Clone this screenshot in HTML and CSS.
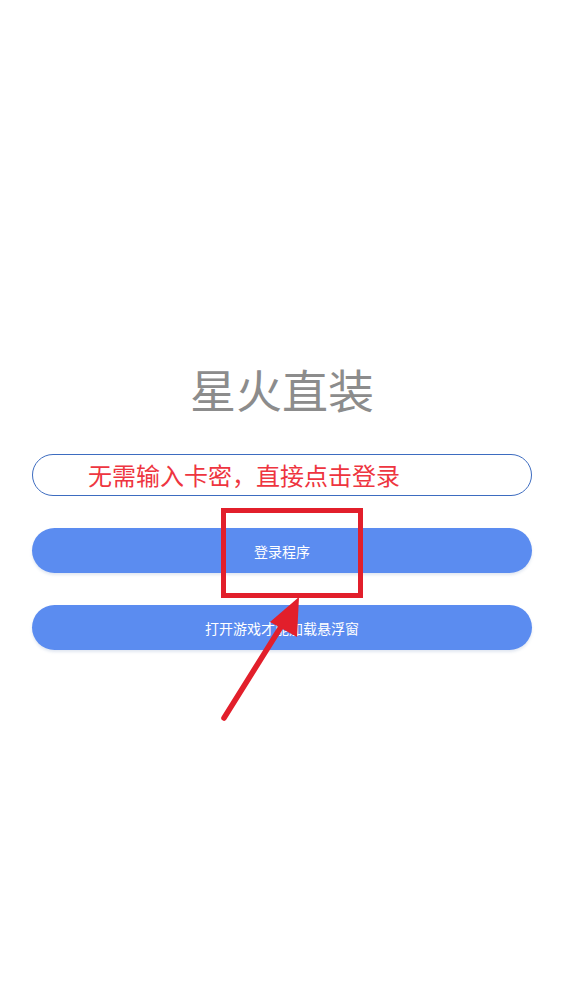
FILE: index.html
```html
<!DOCTYPE html>
<html lang="zh-CN">
<head>
<meta charset="utf-8">
<link rel="stylesheet" href="styles.css">
</head>
<body>
<main class="page">
  <h1 class="title">星火直装</h1>
  <div class="input">无需输入卡密，直接点击登录</div>
  <button class="btn btn-login">登录程序</button>
  <button class="btn btn-game">打开游戏才能加载悬浮窗</button>
</main>
<svg class="annot" width="564" height="1004" viewBox="0 0 564 1004" xmlns="http://www.w3.org/2000/svg">
  <rect x="223.5" y="510.5" width="137" height="85" fill="none" stroke="#e21f2b" stroke-width="5"/>
  <line x1="224" y1="718" x2="284" y2="622" stroke="#e21f2b" stroke-width="5.5" stroke-linecap="round"/>
  <polygon points="299,597 297,637 270,622" fill="#e21f2b"/>
</svg>
</body>
</html>
```
FILE: styles.css
```css
html, body {
  margin: 0;
  padding: 0;
  background: #ffffff;
}
body {
  width: 564px;
  height: 1004px;
  position: relative;
  font-family: "Noto Sans CJK SC", "Noto Sans", sans-serif;
  overflow: hidden;
}
.page {
  display: flex;
  flex-direction: column;
  align-items: stretch;
  padding: 360px 32px 0 32px;
}
.title {
  margin: 0;
  text-align: center;
  font-size: 46px;
  line-height: 56px;
  font-weight: 400;
  color: #8c8c8c;
}
.input {
  margin-top: 38px;
  height: 38px;
  padding-bottom: 2px;
  border: 1px solid #3d6cc0;
  border-radius: 21px;
  box-sizing: content-box;
  padding-left: 55px;
  display: flex;
  align-items: center;
  font-size: 24px;
  color: #ee3540;
  white-space: nowrap;
}
.btn {
  display: block;
  width: 100%;
  height: 45px;
  border: none;
  border-radius: 23px;
  background: #5b8cf0;
  color: #ffffff;
  font-family: "Noto Sans CJK SC", "Noto Sans", sans-serif;
  font-size: 14px;
  padding: 0;
  box-shadow: 0 2px 3px rgba(90, 120, 180, 0.18);
}
.btn-login {
  margin-top: 32px;
}
.btn-game {
  margin-top: 32px;
}
.annot {
  position: absolute;
  left: 0;
  top: 0;
  pointer-events: none;
}
```
